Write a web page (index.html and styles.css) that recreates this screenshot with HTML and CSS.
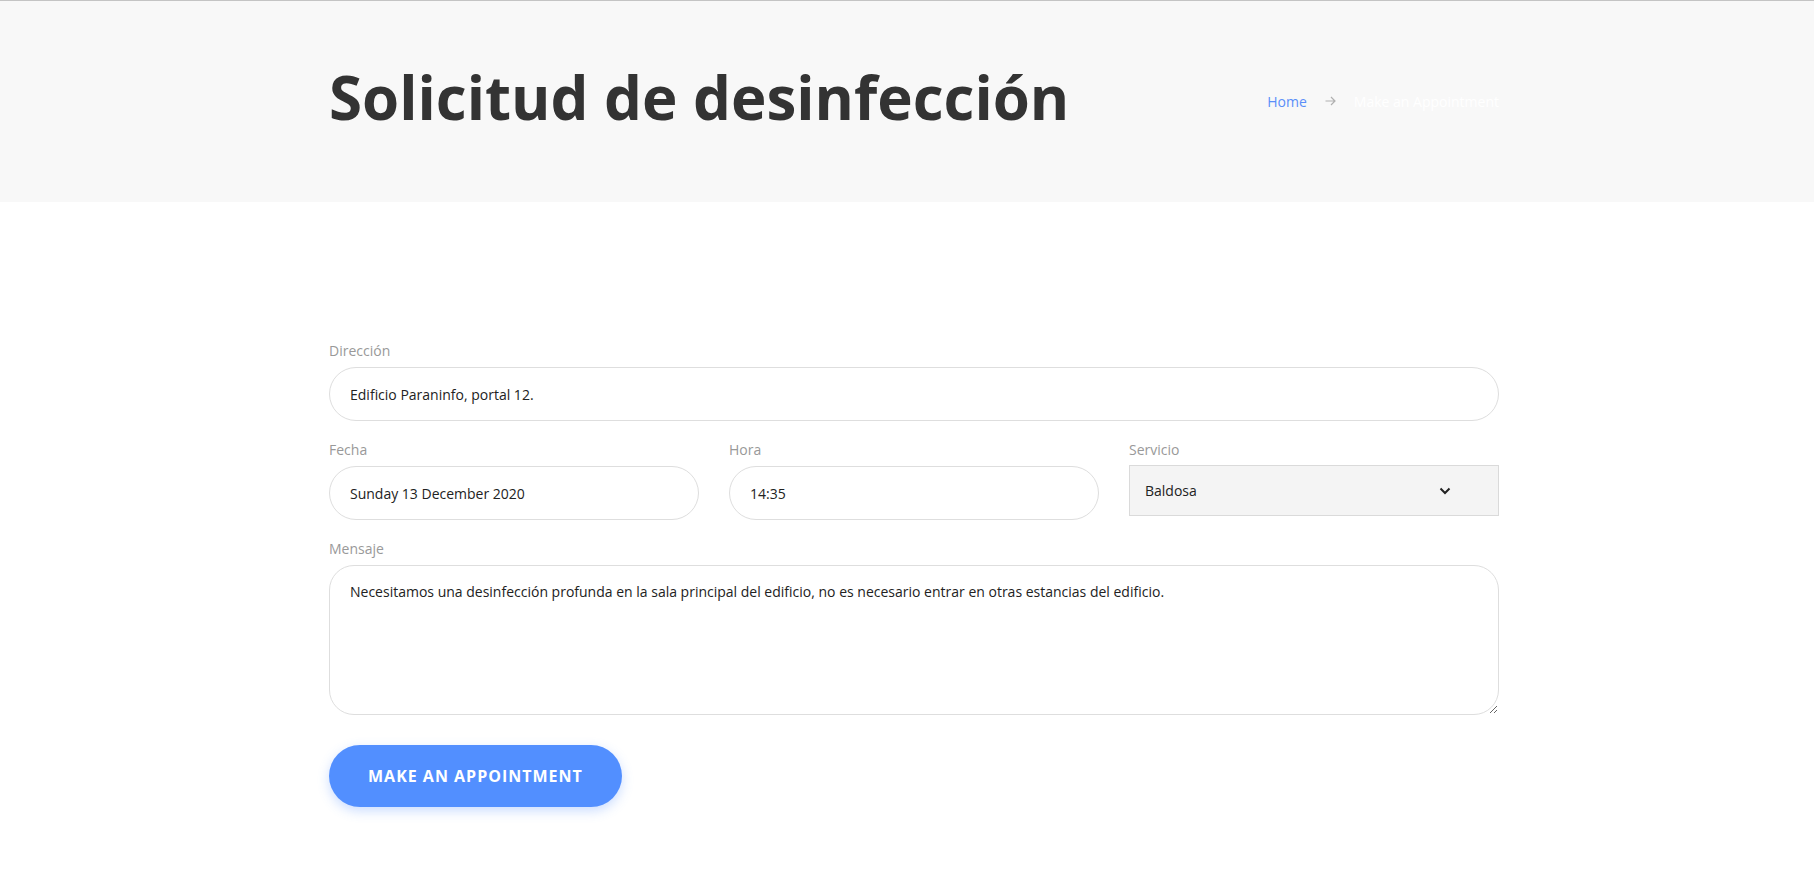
FILE: index.html
```html
<!DOCTYPE html>
<html lang="es">
<head>
<meta charset="utf-8">
<title>Solicitud de desinfección</title>
<link rel="stylesheet" href="styles.css">
</head>
<body>
<header class="page-header">
  <div class="container header-row">
    <h1 class="page-title">Solicitud de desinfección</h1>
    <nav class="breadcrumb">
      <a class="crumb-link" href="#">Home</a>
      <svg class="crumb-arrow" width="11" height="10" viewBox="0 0 11 10" aria-hidden="true"><path d="M0.5 5H10M6 1L10 5L6 9" fill="none" stroke="#b0b0b0" stroke-width="1.2"/></svg>
      <span class="crumb-current">Make an Appointment</span>
    </nav>
  </div>
</header>
<main class="section">
  <form class="container form">
    <div class="group">
      <label class="label">Dirección</label>
      <div class="input">Edificio Paraninfo, portal 12.</div>
    </div>
    <div class="row3">
      <div class="group">
        <label class="label">Fecha</label>
        <div class="input">Sunday 13 December 2020</div>
      </div>
      <div class="group">
        <label class="label">Hora</label>
        <div class="input">14:35</div>
      </div>
      <div class="group">
        <label class="label">Servicio</label>
        <div class="select">
          <span>Baldosa</span>
          <svg class="chev" width="12" height="8" viewBox="0 0 12 8" aria-hidden="true"><path d="M1.5 1.5L6 6L10.5 1.5" fill="none" stroke="#222" stroke-width="2"/></svg>
        </div>
      </div>
    </div>
    <div class="group">
      <label class="label">Mensaje</label>
      <textarea class="textarea">Necesitamos una desinfección profunda en la sala principal del edificio, no es necesario entrar en otras estancias del edificio.</textarea>
    </div>
    <div class="actions">
      <button type="button" class="btn">MAKE AN APPOINTMENT</button>
    </div>
  </form>
</main>
</body>
</html>
```
FILE: styles.css
```css
* { box-sizing: border-box; }
html, body { margin: 0; padding: 0; }
body {
  font-family: "Open Sans", "Liberation Sans", sans-serif;
  font-size: 14px;
  line-height: 1.5;
  color: #222;
  background: #fff;
  padding-left: 14px;
}
.container {
  width: 1170px;
  margin: 0 auto;
}
.page-header {
  background: #f8f8f8;
  border-top: 1px solid #c4c4c4;
  margin-left: -14px;
  padding-left: 14px;
}
.header-row {
  height: 201px;
  display: flex;
  align-items: center;
  justify-content: space-between;
}
.page-title {
  margin: 0 0 10px;
  font-size: 60px;
  font-weight: 700;
  line-height: 1.2;
  color: #333;
}
.breadcrumb {
  display: flex;
  align-items: center;
  gap: 18px;
  font-size: 14px;
  padding-bottom: 1px;
}
.crumb-link { color: #5b8ff9; text-decoration: none; }
.crumb-current { color: #ffffff; }
.section {
  padding-top: 138px;
  padding-bottom: 80px;
}
.group { margin-bottom: 18px; }
.label {
  display: block;
  color: #999;
  font-size: 14px;
  margin-bottom: 6px;
}
.input {
  height: 54px;
  border: 1px solid #dedede;
  border-radius: 27px;
  padding: 0 20px;
  display: flex;
  align-items: center;
  font-size: 14px;
  color: #222;
}
.row3 {
  display: grid;
  grid-template-columns: repeat(3, 1fr);
  column-gap: 30px;
}
.select {
  height: 51px;
  margin-top: -1px;
  background: #f4f4f4;
  border: 1px solid #dadada;
  padding: 0 47px 0 15px;
  display: flex;
  align-items: center;
  justify-content: space-between;
  color: #222;
}
.chev { display: block; }
.textarea {
  display: block;
  width: 100%;
  height: 150px;
  border: 1px solid #dedede;
  border-radius: 25px;
  padding: 15px 20px;
  font-family: "Open Sans", "Liberation Sans", sans-serif;
  font-size: 14px;
  line-height: 1.5;
  color: #222;
  background: #fff;
  resize: vertical;
  outline: none;
}
.actions { padding-top: 12px; }
.btn {
  height: 62px;
  padding: 0 39px;
  border: none;
  border-radius: 31px;
  background: #528fff;
  color: #fff;
  font-family: "Open Sans", "Liberation Sans", sans-serif;
  font-size: 16px;
  font-weight: 700;
  letter-spacing: 1px;
  box-shadow: 0 4px 12px rgba(82, 143, 255, 0.3);
  cursor: pointer;
}
```
